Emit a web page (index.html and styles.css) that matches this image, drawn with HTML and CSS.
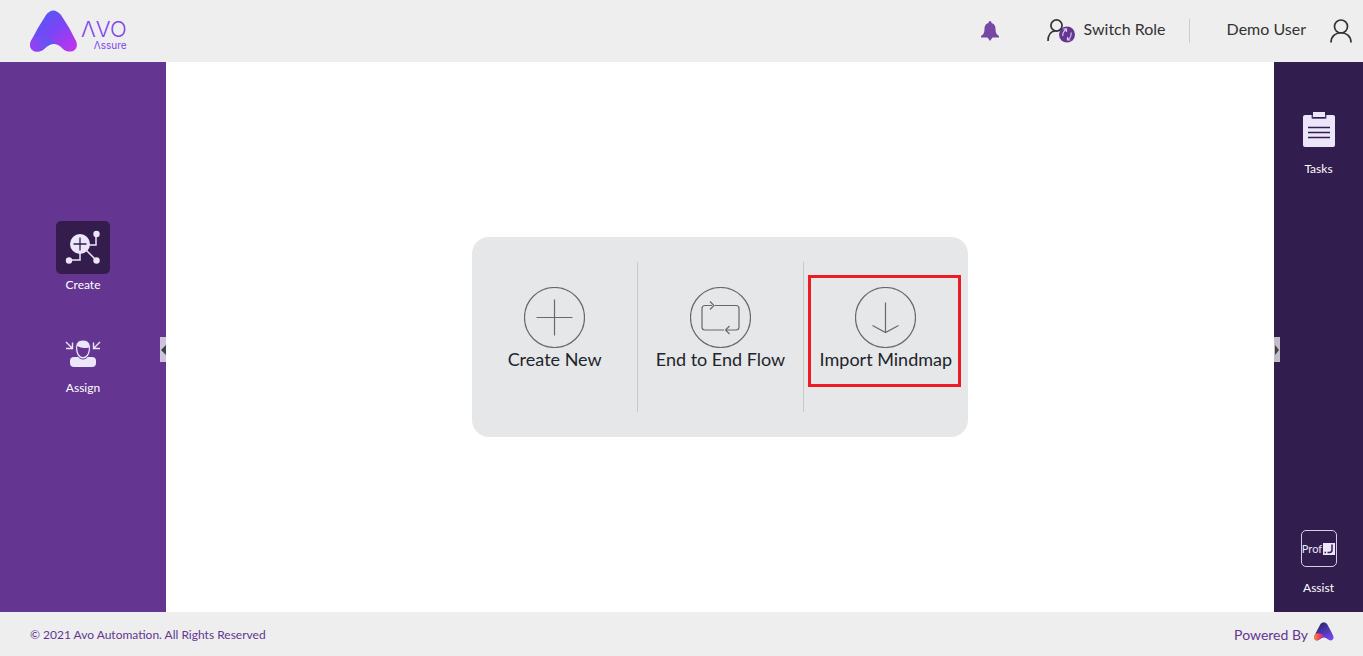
FILE: index.html
```html
<!DOCTYPE html>
<html lang="en">
<head>
<meta charset="utf-8">
<title>Avo Assure</title>
<link rel="stylesheet" href="styles.css">
</head>
<body>
<header class="topbar">
  <a class="brand" href="#">
    <svg class="brand-mark" width="48" height="44" viewBox="0 0 48 44" aria-hidden="true">
      <defs>
        <linearGradient id="mark" x1="0.1" y1="0.1" x2="0.9" y2="0.9"><stop offset="0" stop-color="#4f5bf5"/><stop offset="0.5" stop-color="#7a45f6"/><stop offset="1" stop-color="#b935ee"/></linearGradient>
        <linearGradient id="fold" x1="0" y1="0.6" x2="1" y2="0.3"><stop offset="0" stop-color="#9a3ff2"/><stop offset="1" stop-color="#4f5bf5"/></linearGradient>
      </defs>
      <path d="M16 6Q23-3 31 6Q40 19 46 32C50 41 40 46 33 40Q24 30 14 40C7 46-3 41 1 32Q8 18 16 6Z" fill="url(#mark)"/>
      <path d="M5 28Q15 26 25 34Q19 35 14 40C7 46-3 41 1 32Q2 29 5 28Z" fill="url(#fold)"/>
    </svg>
    <span class="brand-text"><span class="brand-name">ΛVO</span><span class="brand-sub">Λssure</span></span>
  </a>
  <nav class="top-actions">
    <button class="bell" aria-label="Notifications">
      <svg width="18" height="20" viewBox="0 0 18 20"><path d="M9 0C10 0 10.500 1 10.500 2C14 3 14.500 6 14.500 8C14.500 12 16 14 18 15V16.500H11.500L9 20L6.500 16.500H0V15C2 14 3.500 12 3.500 8C3.500 6 4 3 7.500 2C7.500 1 8 0 9 0Z" fill="#7549a3"/></svg>
    </button>
    <button class="role-btn">
      <svg width="28" height="24" viewBox="0 0 28 24"><g fill="none" stroke="#303338" stroke-width="1.700"><circle cx="9.500" cy="6.500" r="5.600"/><path d="M1 22C1 16 4 12.500 8 12"/></g><circle cx="20" cy="15.500" r="8" fill="#643691"/><path d="M16 17Q15 13.500 19 10.500M16.500 10.200L19.500 10L19.500 13M24 13.500Q25 17.500 21 20.500M23.500 21L20.500 21V18" fill="none" stroke="#d9c6e8" stroke-width="1.200"/></svg>
      <span>Switch Role</span>
    </button>
    <button class="user-btn">
      <span>Demo User</span>
      <svg width="22" height="24" viewBox="0 0 22 24" fill="none" stroke="#303338" stroke-width="1.700"><circle cx="11" cy="7.500" r="6.500"/><path d="M1 23.500C1 10.500 21 10.500 21 23.500"/></svg>
    </button>
  </nav>
</header>

<div class="workspace">
  <aside class="sidebar">
    <button class="side-item">
      <span class="tile">
        <svg width="36" height="36" viewBox="0 0 36 36"><path d="M16 15H31V5M15 15V30H4M16 15L31 30" fill="none" stroke="#ece6fb" stroke-width="1.500"/><g fill="#ece6fb"><circle cx="15" cy="14" r="10"/><circle cx="31.500" cy="4" r="3.200"/><circle cx="4" cy="30.500" r="3.200"/><circle cx="31.500" cy="30.500" r="3.200"/></g><path d="M8.500 14H21.500M15 7.500V20.500" stroke="#341d4d" stroke-width="1.300"/></svg>
      </span>
      <span>Create</span>
    </button>
    <button class="side-item assign">
      <svg width="36" height="28" viewBox="0 0 36 28"><rect x="5" y="17" width="26" height="10" rx="4" fill="#ece6fb"/><path d="M18 0C23 0 25.500 3.500 25.500 8C25.500 14 22.500 19 18 19S10.500 14 10.500 8C10.500 3.500 13 0 18 0Z" fill="#ece6fb" stroke="#643691"/><path d="M12.200 6Q17 9 23.800 7.500C24 13 21.500 17 18 17S12 13 12.200 6Z" fill="#643691"/><path d="M1 2L7 8M1 8.500H7.500V2.500M35 2L29 8M35 8.500H28.500V2.500" fill="none" stroke="#ece6fb" stroke-width="1.400"/></svg>
      <span>Assign</span>
    </button>
    <button class="handle handle-left" aria-label="Collapse left panel"><svg width="6" height="10" viewBox="0 0 6 10"><path d="M6 0V10L1 5Z" fill="#414042"/></svg></button>
  </aside>

  <main class="content">
    <section class="panel">
      <button class="option">
        <svg width="61" height="61" viewBox="0 0 61 61"><circle cx="30.500" cy="30.500" r="30"/><path d="M30.500 12.500V48.500M12.500 30.500H48.500"/></svg>
        <span>Create New</span>
      </button>
      <button class="option">
        <svg width="61" height="61" viewBox="0 0 61 61"><circle cx="30.500" cy="30.500" r="30"/><path d="M22 18.500H15Q12 18.500 12 21.500V40Q12 43 15 43H34M25 18.500H46Q49 18.500 49 21.500V40Q49 43 46 43H36M20 14.500L24 18.500L20 22.500M39.500 39L35.500 43L39.500 47"/></svg>
        <span>End to End Flow</span>
      </button>
      <button class="option highlighted">
        <svg width="61" height="61" viewBox="0 0 61 61"><circle cx="30.500" cy="30.500" r="30"/><path d="M30.500 15.500V45.500M17.500 38.500L30.500 45.500L43.500 38.500"/></svg>
        <span>Import Mindmap</span>
      </button>
    </section>
  </main>

  <aside class="rail">
    <button class="side-item">
      <svg width="32" height="35" viewBox="0 0 32 35"><path d="M2 3H9V6H23V3H30Q32 3 32 5V33Q32 35 30 35H2Q0 35 0 33V5Q0 3 2 3Z" fill="#ece6fb"/><path d="M9 3V6.500H23V3" fill="none" stroke="#6f5b8c"/><rect x="10" y="0" width="12" height="5" fill="#ece6fb"/><path d="M5 15.500H27M5 20.500H27M5 25.500H27" stroke="#341d4d" stroke-width="1.500"/></svg>
      <span>Tasks</span>
    </button>
    <button class="side-item assist">
      <span class="prof"><span>Prof</span><svg width="12" height="12" viewBox="0 0 12 12"><rect width="12" height="12" fill="#ece6fb"/><path d="M9 1.500V7Q9 9.500 6.500 9.500H4.500M1.500 9.500H3" fill="none" stroke="#341d4d" stroke-width="1.500"/></svg></span>
      <span>Assist</span>
    </button>
    <button class="handle handle-right" aria-label="Collapse right panel"><svg width="6" height="10" viewBox="0 0 6 10"><path d="M1 0V10L5 5Z" fill="#414042"/></svg></button>
  </aside>
</div>

<footer class="footer">
  <span class="copyright">© 2021 Avo Automation. All Rights Reserved</span>
  <a class="powered" href="#"><span>Powered By</span>
    <svg width="20" height="19" viewBox="0 0 48 44" preserveAspectRatio="none"><defs><linearGradient id="foot" x1="0.2" y1="0.1" x2="0.8" y2="0.9"><stop offset="0.1" stop-color="#302a78"/><stop offset="1" stop-color="#7044e8"/></linearGradient><linearGradient id="flame" x1="0" y1="0.5" x2="1" y2="0.5"><stop offset="0" stop-color="#ff8a2b"/><stop offset="0.5" stop-color="#ee4266"/><stop offset="1" stop-color="#7d34b8"/></linearGradient></defs><path d="M16 4Q23-3 31 4Q40 19 46 32C50 41 40 46 33 40Q24 32 14 40C7 46-3 41 1 32Q8 18 16 4Z" fill="url(#foot)"/><path d="M4 27Q15 23 26 33Q19 35 14 40C7 46-3 41 1 32Q2 29 4 27Z" fill="url(#flame)"/></svg>
  </a>
</footer>
</body>
</html>
```
FILE: styles.css
```css
* {
  box-sizing: border-box;
}

body {
  margin: 0;
  min-height: 100vh;
  display: flex;
  flex-direction: column;
  font-family: Lato, "Liberation Sans", sans-serif;
  color: #333;
  background: #fff;
}

button {
  margin: 0;
  padding: 0;
  border: 0;
  background: none;
  font: inherit;
  color: inherit;
  cursor: pointer;
}

a {
  color: inherit;
  text-decoration: none;
}

svg {
  display: block;
  flex: none;
}

.topbar {
  display: flex;
  justify-content: space-between;
  align-items: center;
  height: 62px;
  padding: 0 11px 0 30px;
  background: #eee;
}

.brand {
  display: flex;
  align-items: flex-end;
  gap: 3px;
}

.brand-text {
  display: flex;
  flex-direction: column;
  align-items: flex-end;
  padding-bottom: 3px;
  color: #8145ee;
  font-family: Inter, sans-serif;
}

.brand-name {
  font-size: 22px;
  font-weight: 300;
  line-height: 22px;
}

.brand-sub {
  font-size: 10px;
  line-height: 10px;
}

.top-actions {
  display: flex;
  align-items: center;
  font-size: 16px;
  line-height: 20px;
}

.bell {
  margin-right: 48px;
}

.role-btn,
.user-btn {
  display: flex;
  align-items: center;
  height: 24px;
}

.role-btn span,
.user-btn span {
  padding-bottom: 4px;
}

.role-btn {
  gap: 9px;
  padding-right: 23px;
  border-right: 1px solid #ccc;
}

.user-btn {
  gap: 24px;
  padding-left: 37px;
}

.workspace {
  flex: 1;
  display: flex;
}

.sidebar,
.rail {
  position: relative;
  flex: none;
  display: flex;
  flex-direction: column;
  align-items: center;
  color: #fff;
  font-size: 12px;
  line-height: 16px;
}

.sidebar {
  width: 166px;
  padding-top: 159px;
  gap: 47px;
  background: #643691;
}

.side-item {
  display: flex;
  flex-direction: column;
  align-items: center;
  gap: 3px;
}

.assign {
  gap: 12px;
}

.tile {
  display: flex;
  align-items: center;
  justify-content: center;
  width: 54px;
  height: 53px;
  border-radius: 5px;
  background: #341d4d;
}

.rail {
  width: 89px;
  padding: 50px 0 16px;
  justify-content: space-between;
  background: #311d4e;
}

.rail .side-item {
  gap: 14px;
}

.rail .assist {
  gap: 13px;
}

.prof {
  display: flex;
  align-items: center;
  justify-content: center;
  gap: 1px;
  width: 36px;
  height: 37px;
  border: 1px solid #d6cfe4;
  border-radius: 5px;
  font-size: 11px;
  color: #ece6fb;
}

.handle {
  position: absolute;
  top: 50%;
  width: 6px;
  height: 25px;
  background: #cfc2dd;
}

.handle-left {
  right: 0;
}

.handle-right {
  left: 0;
  background: #c1bbca;
}

.content {
  flex: 1;
  display: flex;
  align-items: center;
  justify-content: center;
}

.panel {
  display: grid;
  grid-template-columns: repeat(3, 1fr);
  width: 496px;
  padding: 25px 0;
  border-radius: 17px;
  background: #e6e7e9;
}

.option {
  position: relative;
  display: flex;
  flex-direction: column;
  align-items: center;
  height: 150px;
  padding-top: 25px;
  font-size: 18px;
  line-height: 22px;
  color: #212529;
}

.option + .option {
  border-left: 1px solid #c8c9cb;
}

.option svg {
  fill: none;
  stroke: #68696b;
  stroke-width: 1.2;
}

.highlighted::after {
  content: "";
  position: absolute;
  inset: 13px 7px 25px 4px;
  border: 3px solid #ed1c24;
}

.footer {
  display: flex;
  align-items: center;
  justify-content: space-between;
  height: 44px;
  padding: 0 29px 6px 30px;
  background: #eee;
  color: #643691;
}

.copyright {
  padding-top: 6px;
  font-size: 12px;
}

.powered {
  display: flex;
  align-items: center;
  gap: 6px;
  font-size: 14px;
}

.powered span {
  padding-top: 7px;
}
```
